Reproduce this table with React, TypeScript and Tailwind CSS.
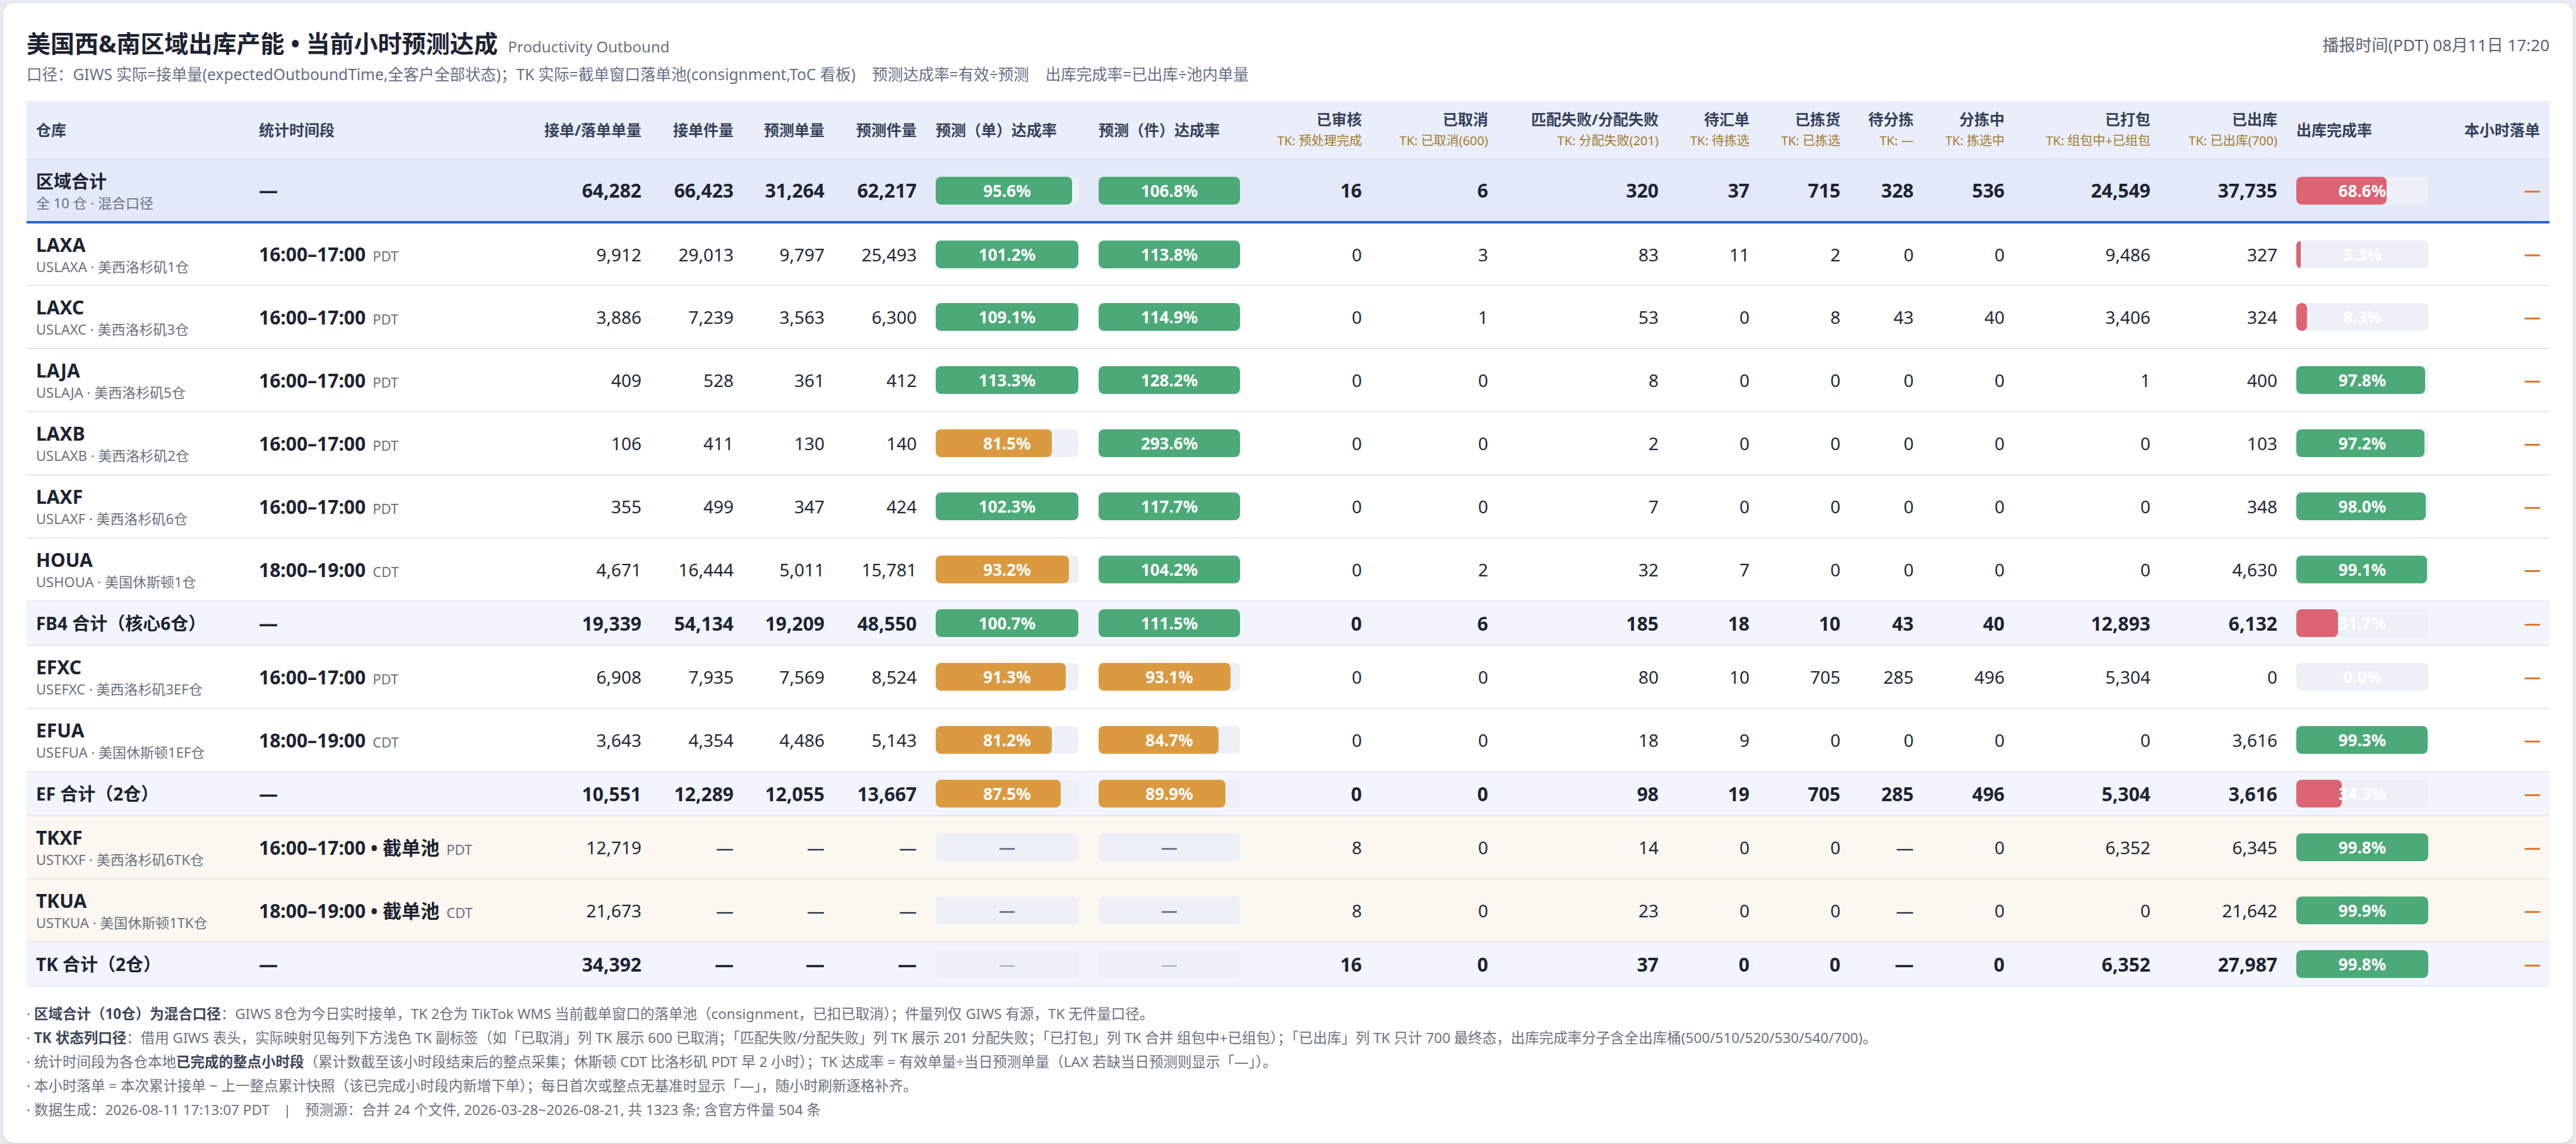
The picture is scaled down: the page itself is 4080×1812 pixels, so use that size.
// ── Outbound productivity board ─────────────────────────────
// Regional outbound capacity table with hourly forecast bars.

type Kind = "region" | "wh" | "sub" | "tk";

interface Row {
  kind: Kind;
  name: string;
  desc?: string;
  time?: string;
  tz?: string;
  nums: string[];
  r1: number | null;
  r2: number | null;
  status: string[];
  out: number;
}

// ── Columns ──────────────────────────────────────────────────

const WIDTHS = [
  "w-[353px]", "w-[450px]", "w-[186px]", "w-[146px]", "w-[144px]", "w-[146px]",
  "w-[258px]", "w-[254px]", "w-[193px]", "w-[200px]", "w-[270px]", "w-[144px]",
  "w-[144px]", "w-[116px]", "w-[144px]", "w-[231px]", "w-[201px]", "w-[240px]", "w-[176px]",
];

const HEADERS: { label: string; sub?: string; align: "left" | "right" }[] = [
  { label: "仓库", align: "left" },
  { label: "统计时间段", align: "left" },
  { label: "接单/落单单量", align: "right" },
  { label: "接单件量", align: "right" },
  { label: "预测单量", align: "right" },
  { label: "预测件量", align: "right" },
  { label: "预测（单）达成率", align: "left" },
  { label: "预测（件）达成率", align: "left" },
  { label: "已审核", sub: "TK: 预处理完成", align: "right" },
  { label: "已取消", sub: "TK: 已取消(600)", align: "right" },
  { label: "匹配失败/分配失败", sub: "TK: 分配失败(201)", align: "right" },
  { label: "待汇单", sub: "TK: 待拣选", align: "right" },
  { label: "已拣货", sub: "TK: 已拣选", align: "right" },
  { label: "待分拣", sub: "TK: —", align: "right" },
  { label: "分拣中", sub: "TK: 拣选中", align: "right" },
  { label: "已打包", sub: "TK: 组包中+已组包", align: "right" },
  { label: "已出库", sub: "TK: 已出库(700)", align: "right" },
  { label: "出库完成率", align: "left" },
  { label: "本小时落单", align: "right" },
];

// ── Data ─────────────────────────────────────────────────────

const ROWS: Row[] = [
  { kind: "region", name: "区域合计", desc: "全 10 仓 · 混合口径", nums: ["64,282", "66,423", "31,264", "62,217"], r1: 95.6, r2: 106.8, status: ["16", "6", "320", "37", "715", "328", "536", "24,549", "37,735"], out: 68.6 },
  { kind: "wh", name: "LAXA", desc: "USLAXA · 美西洛杉矶1仓", time: "16:00–17:00", tz: "PDT", nums: ["9,912", "29,013", "9,797", "25,493"], r1: 101.2, r2: 113.8, status: ["0", "3", "83", "11", "2", "0", "0", "9,486", "327"], out: 3.3 },
  { kind: "wh", name: "LAXC", desc: "USLAXC · 美西洛杉矶3仓", time: "16:00–17:00", tz: "PDT", nums: ["3,886", "7,239", "3,563", "6,300"], r1: 109.1, r2: 114.9, status: ["0", "1", "53", "0", "8", "43", "40", "3,406", "324"], out: 8.3 },
  { kind: "wh", name: "LAJA", desc: "USLAJA · 美西洛杉矶5仓", time: "16:00–17:00", tz: "PDT", nums: ["409", "528", "361", "412"], r1: 113.3, r2: 128.2, status: ["0", "0", "8", "0", "0", "0", "0", "1", "400"], out: 97.8 },
  { kind: "wh", name: "LAXB", desc: "USLAXB · 美西洛杉矶2仓", time: "16:00–17:00", tz: "PDT", nums: ["106", "411", "130", "140"], r1: 81.5, r2: 293.6, status: ["0", "0", "2", "0", "0", "0", "0", "0", "103"], out: 97.2 },
  { kind: "wh", name: "LAXF", desc: "USLAXF · 美西洛杉矶6仓", time: "16:00–17:00", tz: "PDT", nums: ["355", "499", "347", "424"], r1: 102.3, r2: 117.7, status: ["0", "0", "7", "0", "0", "0", "0", "0", "348"], out: 98.0 },
  { kind: "wh", name: "HOUA", desc: "USHOUA · 美国休斯顿1仓", time: "18:00–19:00", tz: "CDT", nums: ["4,671", "16,444", "5,011", "15,781"], r1: 93.2, r2: 104.2, status: ["0", "2", "32", "7", "0", "0", "0", "0", "4,630"], out: 99.1 },
  { kind: "sub", name: "FB4 合计（核心6仓）", nums: ["19,339", "54,134", "19,209", "48,550"], r1: 100.7, r2: 111.5, status: ["0", "6", "185", "18", "10", "43", "40", "12,893", "6,132"], out: 31.7 },
  { kind: "wh", name: "EFXC", desc: "USEFXC · 美西洛杉矶3EF仓", time: "16:00–17:00", tz: "PDT", nums: ["6,908", "7,935", "7,569", "8,524"], r1: 91.3, r2: 93.1, status: ["0", "0", "80", "10", "705", "285", "496", "5,304", "0"], out: 0 },
  { kind: "wh", name: "EFUA", desc: "USEFUA · 美国休斯顿1EF仓", time: "18:00–19:00", tz: "CDT", nums: ["3,643", "4,354", "4,486", "5,143"], r1: 81.2, r2: 84.7, status: ["0", "0", "18", "9", "0", "0", "0", "0", "3,616"], out: 99.3 },
  { kind: "sub", name: "EF 合计（2仓）", nums: ["10,551", "12,289", "12,055", "13,667"], r1: 87.5, r2: 89.9, status: ["0", "0", "98", "19", "705", "285", "496", "5,304", "3,616"], out: 34.3 },
  { kind: "tk", name: "TKXF", desc: "USTKXF · 美西洛杉矶6TK仓", time: "16:00–17:00 • 截单池", tz: "PDT", nums: ["12,719", "—", "—", "—"], r1: null, r2: null, status: ["8", "0", "14", "0", "0", "—", "0", "6,352", "6,345"], out: 99.8 },
  { kind: "tk", name: "TKUA", desc: "USTKUA · 美国休斯顿1TK仓", time: "18:00–19:00 • 截单池", tz: "CDT", nums: ["21,673", "—", "—", "—"], r1: null, r2: null, status: ["8", "0", "23", "0", "0", "—", "0", "0", "21,642"], out: 99.9 },
  { kind: "sub", name: "TK 合计（2仓）", nums: ["34,392", "—", "—", "—"], r1: null, r2: null, status: ["16", "0", "37", "0", "0", "—", "0", "6,352", "27,987"], out: 99.8 },
];

const ROW_STYLE: Record<Kind, string> = {
  region: "h-[100px] bg-[#e3e9f9] border-b-4 border-[#2f66dc]",
  wh: "h-[100px] bg-white border-b-2 border-[#e4e8f0]",
  sub: "h-[70px] bg-[#f2f5fd] border-b-2 border-[#e4e8f0]",
  tk: "h-[100px] bg-[#fcf8f1] border-b-2 border-[#e4e8f0]",
};

// ── Rate bar ─────────────────────────────────────────────────

function RateBar({ v, w, faint }: { v: number | null; w: string; faint?: boolean }) {
  const fill = v === null ? "" : v >= 95 ? "bg-[#4caa78]" : v >= 80 ? "bg-[#dc9a40]" : "bg-[#dd6472]";
  return (
    <div className={`relative h-[44px] ${w} overflow-hidden rounded-[8px] bg-[#edf0f7]`}>
      {v !== null && v > 0 && (
        <div className={`h-full rounded-[8px] ${fill}`} style={{ width: `${Math.min(v, 100)}%` }} />
      )}
      <div className="absolute inset-0 flex items-center justify-center text-[26px] font-bold leading-none text-white">
        {v === null ? (
          <span className={faint ? "font-normal text-[#a0a8b8]" : "text-[#707b91]"}>—</span>
        ) : (
          `${v.toFixed(1)}%`
        )}
      </div>
    </div>
  );
}

// ── App ──────────────────────────────────────────────────────

export default function App() {
  return (
    <div className="min-h-screen bg-[#e8ebf2] p-[4px] font-[family-name:'Noto_Sans','Noto_Sans_CJK_SC',sans-serif] text-[#1f2633]">
      <div className="rounded-[18px] border border-[#e1e5ed] bg-white px-[37px] pb-[33px] pt-[39px] shadow-sm">
        {/* Title */}
        <div className="flex items-center justify-between">
          <div className="flex items-baseline">
            <h1 className="text-[38px] font-bold leading-[48px] text-[#1c2331]">美国西&amp;南区域出库产能 • 当前小时预测达成</h1>
            <span className="ml-[16px] text-[24px] text-[#6b7280]">Productivity Outbound</span>
          </div>
          <span className="pt-[6px] text-[26px] text-[#5b6474]">播报时间(PDT) 08月11日 17:20</span>
        </div>
        <p className="mt-[8px] text-[24.5px] leading-[36px] text-[#667085]">
          口径：GIWS 实际=接单量(expectedOutboundTime,全客户全部状态)；TK 实际=截单窗口落单池(consignment,ToC 看板)
          <span className="ml-[26px]">预测达成率=有效÷预测</span>
          <span className="ml-[26px]">出库完成率=已出库÷池内单量</span>
        </p>

        {/* Table */}
        <table className="mt-[24px] w-full table-fixed">
          <colgroup>
            {WIDTHS.map((w, i) => (
              <col key={i} className={w} />
            ))}
          </colgroup>
          <thead>
            <tr className="h-[92px] border-b-2 border-[#dde3ef] bg-[#eaeefa]">
              {HEADERS.map((h, i) => (
                <th
                  key={i}
                  className={`px-[15px] align-middle font-bold ${h.align === "right" ? "text-right" : "text-left"}`}
                >
                  <div className="whitespace-nowrap text-[24px] leading-[34px] text-[#36415a]">{h.label}</div>
                  {h.sub && (
                    <div className="whitespace-nowrap text-[20px] font-normal leading-[34px] text-[#a37b2c]">{h.sub}</div>
                  )}
                </th>
              ))}
            </tr>
          </thead>
          <tbody>
            {ROWS.map((r, i) => {
              const bold = r.kind === "region" || r.kind === "sub";
              const num = bold ? "text-[30px] font-bold text-[#1c2331]" : "text-[28px] text-[#222a36]";
              return (
                <tr key={i} className={ROW_STYLE[r.kind]}>
                  {/* Warehouse */}
                  <td className="px-[15px] align-middle">
                    {r.kind === "sub" ? (
                      <div className="whitespace-nowrap text-[28px] font-bold text-[#1c2331]">{r.name}</div>
                    ) : (
                      <>
                        <div className={`whitespace-nowrap font-bold leading-[38px] text-[#1c2331] ${r.kind === "region" ? "text-[28px]" : "text-[30px]"}`}>
                          {r.name}
                        </div>
                        <div className="whitespace-nowrap text-[22px] leading-[30px] text-[#6b7280]">{r.desc}</div>
                      </>
                    )}
                  </td>

                  {/* Time window */}
                  <td className="whitespace-nowrap px-[15px] align-middle">
                    {r.time ? (
                      <>
                        <span className="text-[30px] font-bold text-[#1c2331]">{r.time}</span>
                        <span className="ml-[11px] text-[22px] text-[#6b7280]">{r.tz}</span>
                      </>
                    ) : (
                      <span className="text-[30px] font-bold">—</span>
                    )}
                  </td>

                  {r.nums.map((n, j) => (
                    <td key={j} className={`px-[15px] text-right align-middle ${num}`}>
                      {n}
                    </td>
                  ))}

                  <td className="px-[15px] align-middle">
                    <RateBar v={r.r1} w="w-[226px]" faint={bold} />
                  </td>
                  <td className="px-[15px] align-middle">
                    <RateBar v={r.r2} w="w-[224px]" faint={bold} />
                  </td>

                  {r.status.map((n, j) => (
                    <td key={j} className={`px-[15px] text-right align-middle ${num}`}>
                      {n}
                    </td>
                  ))}

                  <td className="px-[15px] align-middle">
                    <RateBar v={r.out} w="w-[209px]" />
                  </td>
                  <td className="px-[14px] text-right align-middle text-[26px] font-bold text-[#e2782c]">—</td>
                </tr>
              );
            })}
          </tbody>
        </table>

        {/* Notes */}
        <div className="mt-[24px] text-[22.5px] leading-[38px] text-[#6b7280]">
          <p>
            · <b className="font-bold text-[#3d4759]">区域合计（10仓）为混合口径</b>：GIWS 8仓为今日实时接单，TK 2仓为 TikTok WMS 当前截单窗口的落单池（consignment，已扣已取消）；件量列仅 GIWS 有源，TK 无件量口径。
          </p>
          <p>
            · <b className="font-bold text-[#3d4759]">TK 状态列口径</b>：借用 GIWS 表头，实际映射见每列下方浅色 TK 副标签（如「已取消」列 TK 展示 600 已取消；「匹配失败/分配失败」列 TK 展示 201 分配失败；「已打包」列 TK 合并 组包中+已组包）；「已出库」列 TK 只计 700 最终态，出库完成率分子含全出库桶(500/510/520/530/540/700)。
          </p>
          <p>
            · 统计时间段为各仓本地<b className="font-bold text-[#3d4759]">已完成的整点小时段</b>（累计数截至该小时段结束后的整点采集；休斯顿 CDT 比洛杉矶 PDT 早 2 小时）；TK 达成率 = 有效单量÷当日预测单量（LAX 若缺当日预测则显示「—」）。
          </p>
          <p>· 本小时落单 = 本次累计接单 − 上一整点累计快照（该已完成小时段内新增下单）；每日首次或整点无基准时显示「—」，随小时刷新逐格补齐。</p>
          <p>
            · 数据生成：2026-08-11 17:13:07 PDT<span className="mx-[22px]">|</span>预测源：合并 24 个文件, 2026-03-28~2026-08-21, 共 1323 条; 含官方件量 504 条
          </p>
        </div>
      </div>
    </div>
  );
}
